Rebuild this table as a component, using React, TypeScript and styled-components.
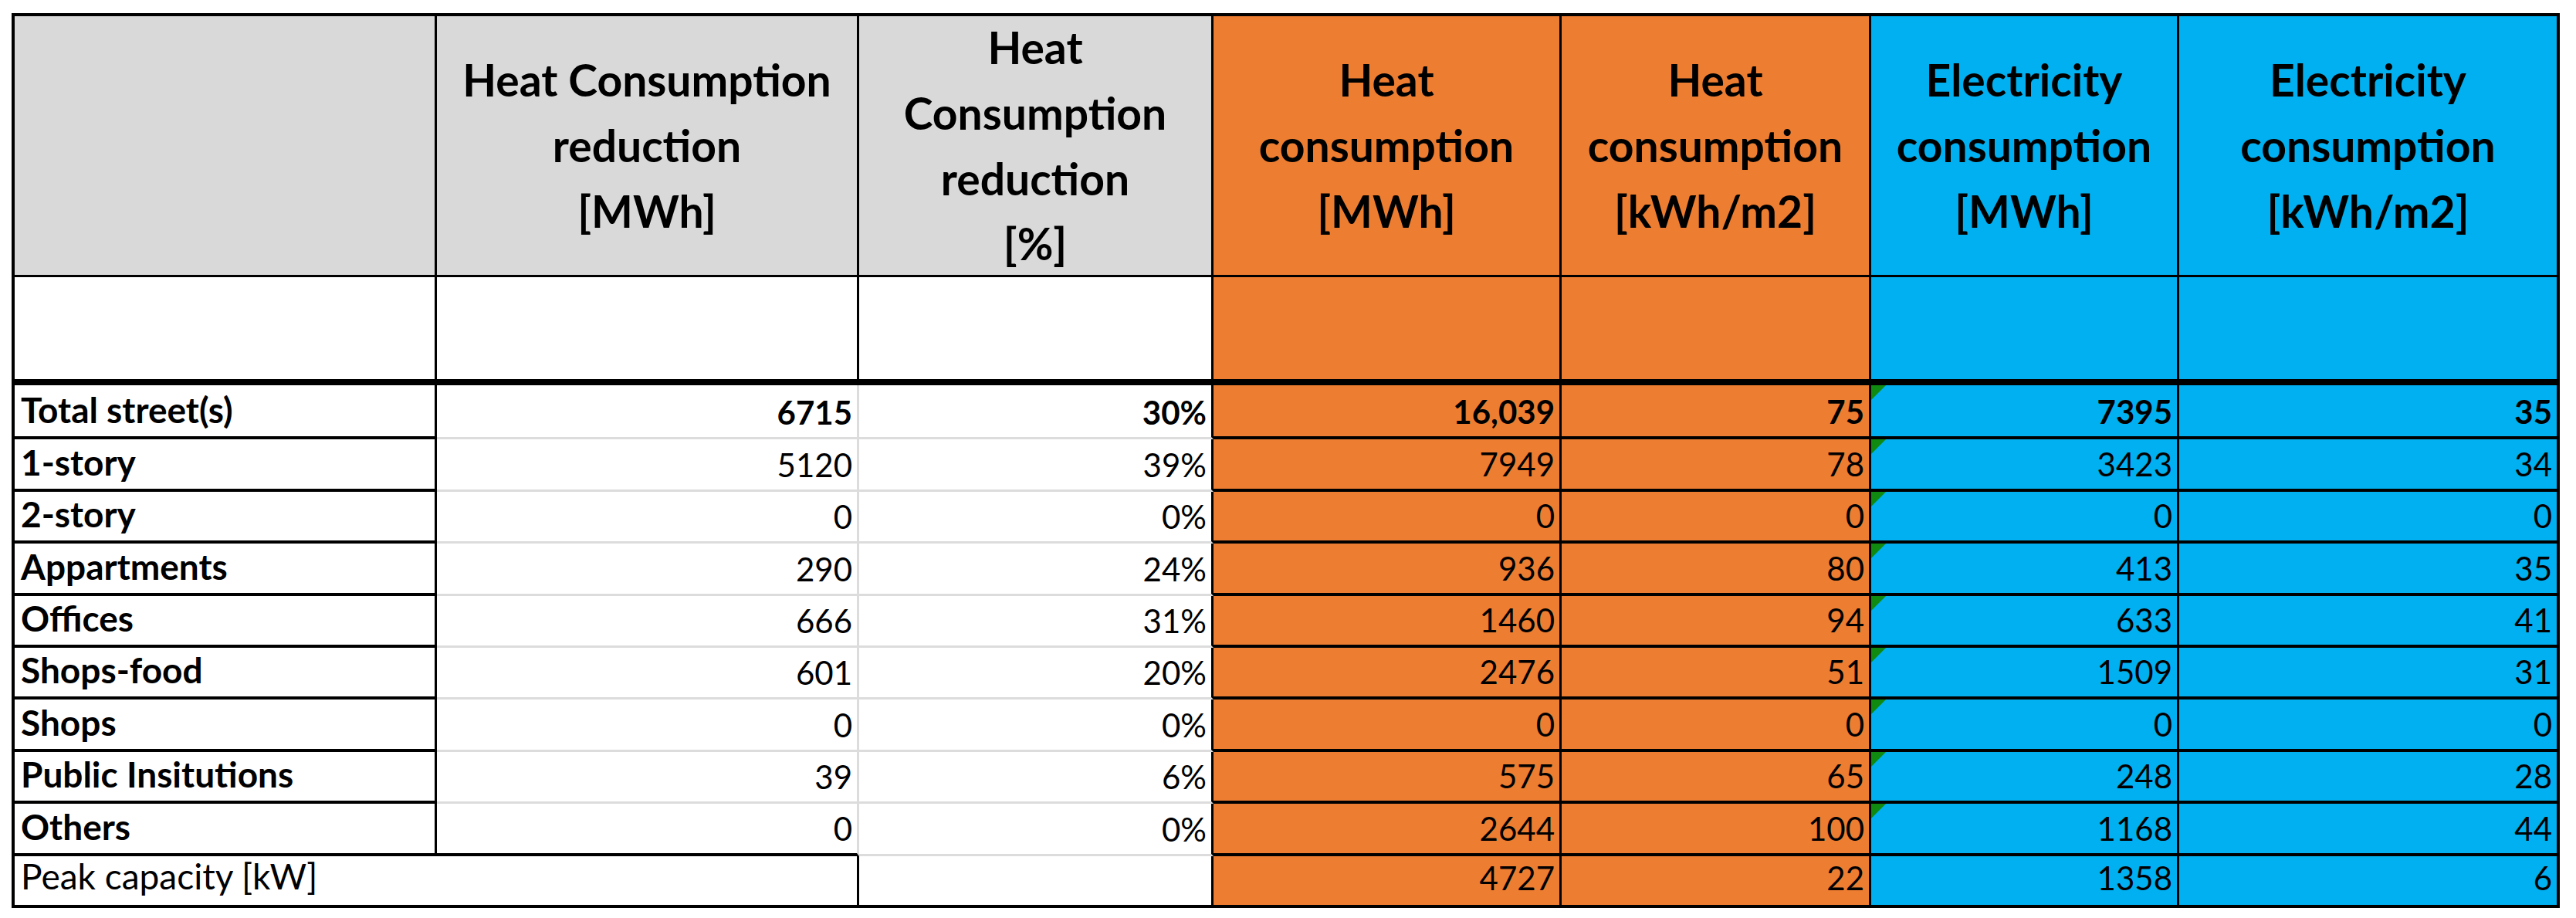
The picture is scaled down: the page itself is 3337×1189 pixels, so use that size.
import React from 'react';
import styled, { createGlobalStyle } from 'styled-components';

const Global = createGlobalStyle`
  html, body { margin: 0; padding: 0; background: #ffffff; }
  body { font-family: Lato, "Open Sans", sans-serif; }
`;

const GREY = '#D9D9D9';
const ORANGE = '#ED7D31';
const BLUE = '#00B0F0';
const GRID = '#DCDCDC';

type Line = 'black' | 'row' | 'grey' | 'thick' | 'none';

const lineCss = (l: Line) => {
  switch (l) {
    case 'black':
      return '3px solid #000';
    case 'row':
      return '4px solid #000';
    case 'grey':
      return `3px solid ${GRID}`;
    case 'thick':
      return '8px solid #000';
    default:
      return 'none';
  }
};

const Page = styled.div`
  width: 3337px;
  height: 1189px;
  box-sizing: border-box;
  padding: 17px 0 0 15px;
  background: #fff;
`;

const Sheet = styled.div`
  display: grid;
  width: 3301px;
  box-sizing: border-box;
  border: 4px solid #000;
  grid-template-columns: 547px 547px 459px 451px 401px 399px 489px;
  grid-template-rows: 338px 140px 70px 68px 67px 68px 67px 67px 68px 67px 68px 63px;
  font-family: Lato, 'Open Sans', sans-serif;
  color: #000;
`;

const Cell = styled.div<{ $bg: string; $right: Line; $bottom: Line; $span?: number }>`
  position: relative;
  box-sizing: border-box;
  background: ${(p) => p.$bg};
  border-right: ${(p) => lineCss(p.$right)};
  border-bottom: ${(p) => lineCss(p.$bottom)};
  grid-column: ${(p) => (p.$span ? `span ${p.$span}` : 'auto')};
  min-width: 0;
`;

const HeadCell = styled(Cell)`
  display: flex;
  align-items: center;
  justify-content: center;
  text-align: center;
  font-weight: 700;
  font-size: 57px;
  line-height: 84.7px;
  white-space: nowrap;
`;

const DataCell = styled(Cell)<{ $bold?: boolean; $label?: boolean }>`
  display: flex;
  align-items: flex-end;
  justify-content: ${(p) => (p.$label ? 'flex-start' : 'flex-end')};
  padding: 0 6px ${(p) => (p.$bottom === 'none' ? 14 : 11)}px 8px;
  font-size: ${(p) => (p.$label ? 46 : 42)}px;
  line-height: 1;
  font-weight: ${(p) => (p.$bold ? 700 : 400)};
  white-space: nowrap;
`;

const Flag = styled.span`
  position: absolute;
  top: 0;
  left: 0;
  width: 0;
  height: 0;
  border-top: 19px solid #108a10;
  border-right: 19px solid transparent;
`;

type Row = { label: string; v: string[]; bold?: boolean };

const rows: Row[] = [
  { label: 'Total street(s)', v: ['6715', '30%', '16,039', '75', '7395', '35'], bold: true },
  { label: '1-story', v: ['5120', '39%', '7949', '78', '3423', '34'] },
  { label: '2-story', v: ['0', '0%', '0', '0', '0', '0'] },
  { label: 'Appartments', v: ['290', '24%', '936', '80', '413', '35'] },
  { label: 'Offices', v: ['666', '31%', '1460', '94', '633', '41'] },
  { label: 'Shops-food', v: ['601', '20%', '2476', '51', '1509', '31'] },
  { label: 'Shops', v: ['0', '0%', '0', '0', '0', '0'] },
  { label: 'Public Insitutions', v: ['39', '6%', '575', '65', '248', '28'] },
  { label: 'Others', v: ['0', '0%', '2644', '100', '1168', '44'] },
];

const headers: { lines: string[]; bg: string }[] = [
  { lines: [], bg: GREY },
  { lines: ['Heat Consumption', 'reduction', '[MWh]'], bg: GREY },
  { lines: ['Heat', 'Consumption', 'reduction', '[%]'], bg: GREY },
  { lines: ['Heat', 'consumption', '[MWh]'], bg: ORANGE },
  { lines: ['Heat', 'consumption', '[kWh/m2]'], bg: ORANGE },
  { lines: ['Electricity', 'consumption', '[MWh]'], bg: BLUE },
  { lines: ['Electricity', 'consumption', '[kWh/m2]'], bg: BLUE },
];

const colBg = ['#fff', '#fff', '#fff', ORANGE, ORANGE, BLUE, BLUE];

export default function App() {
  return (
    <>
      <Global />
      <Page>
        <Sheet>
          {headers.map((h, i) => (
            <HeadCell key={`h${i}`} $bg={h.bg} $right={i < 6 ? 'black' : 'none'} $bottom="black">
              <div>
                {h.lines.map((l, j) => (
                  <div key={j}>{l}</div>
                ))}
              </div>
            </HeadCell>
          ))}
          {colBg.map((bg, i) => (
            <Cell key={`b${i}`} $bg={bg} $right={i < 6 ? 'black' : 'none'} $bottom="thick" />
          ))}
          {rows.map((r, ri) => {
            const last = ri === rows.length - 1;
            return (
              <React.Fragment key={r.label}>
                <DataCell $bg="#fff" $right="black" $bottom="row" $label $bold>
                  {r.label}
                </DataCell>
                {r.v.map((val, ci) => {
                  const col = ci + 1;
                  let right: Line = 'black';
                  let bottom: Line = 'row';
                  if (col === 1) {
                    right = 'grey';
                    bottom = last ? 'row' : 'grey';
                  } else if (col === 2) {
                    bottom = 'grey';
                  }
                  if (col === 6) right = 'none';
                  return (
                    <DataCell key={ci} $bg={colBg[col]} $right={right} $bottom={bottom} $bold={r.bold}>
                      {col === 5 && <Flag />}
                      {val}
                    </DataCell>
                  );
                })}
              </React.Fragment>
            );
          })}
          <DataCell $bg="#fff" $right="black" $bottom="none" $label $span={2}>
            Peak capacity [kW]
          </DataCell>
          <DataCell $bg="#fff" $right="black" $bottom="none" />
          <DataCell $bg={ORANGE} $right="black" $bottom="none">4727</DataCell>
          <DataCell $bg={ORANGE} $right="black" $bottom="none">22</DataCell>
          <DataCell $bg={BLUE} $right="black" $bottom="none">1358</DataCell>
          <DataCell $bg={BLUE} $right="none" $bottom="none">6</DataCell>
        </Sheet>
      </Page>
    </>
  );
}
